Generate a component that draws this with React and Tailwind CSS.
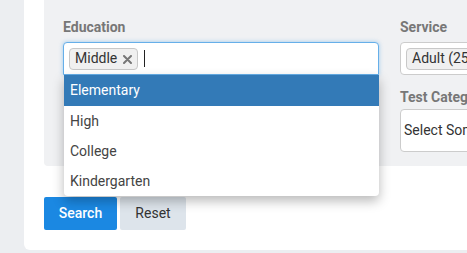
import React from "react";

export default function App() {
  const font = { fontFamily: "Roboto, 'Liberation Sans', Arial, sans-serif" };
  return (
    <div className="w-[467px] h-[253px] overflow-hidden bg-[#eceef1]" style={font}>
      <div className="ml-[24px] w-[470px] h-[250px] bg-white rounded-bl-[6px] pl-[20px] flex flex-col">
        <div className="h-[166px] bg-[#f0f1f3] rounded-bl-[4px] pl-[19px] pt-[17px] flex gap-[21px]">
          <div className="w-[316px] shrink-0 flex flex-col">
            <div className="h-[20px] leading-[20px] text-[14px] font-bold text-[#777] mb-[5px]">Education</div>
            <div className="relative">
              <div className="h-[33px] border border-[#66afe9] rounded-t-[4px] bg-white shadow-[0_0_4px_rgba(102,175,233,0.6)] flex items-center pl-[5px] gap-[6px]">
                <div className="h-[22px] px-[5px] flex items-center gap-[6px] bg-[#f0f0f0] border border-[#c8c8c8] rounded-[4px] text-[14px] text-[#333]">
                  <span>Middle</span>
                  <svg width="9" height="9" viewBox="0 0 9 9" className="mt-[1px]">
                    <path d="M1 1 L8 8 M8 1 L1 8" stroke="#777" strokeWidth="2" strokeLinecap="round" />
                  </svg>
                </div>
                <div className="w-[1px] h-[17px] bg-[#222]" />
              </div>
              <div className="absolute left-[1px] top-[33px] w-[315px] bg-white rounded-b-[4px] shadow-[0_5px_12px_rgba(0,0,0,0.28)] z-10 text-[14px]">
                <div className="h-[31px] flex items-center pl-[6px] bg-[#337ab7] text-white">Elementary</div>
                <div className="h-[30px] flex items-center pl-[6px] text-[#444]">High</div>
                <div className="h-[30px] flex items-center pl-[6px] text-[#444]">College</div>
                <div className="h-[30px] flex items-center pl-[6px] text-[#444]">Kindergarten</div>
              </div>
            </div>
          </div>
          <div className="w-[200px] shrink-0 flex flex-col">
            <div className="h-[20px] leading-[20px] text-[14px] font-bold text-[#777] mb-[5px]">Service</div>
            <div className="h-[33px] border border-[#ccc] rounded-[4px] bg-white flex items-center pl-[5px]">
              <div className="h-[22px] px-[5px] flex items-center bg-[#f0f0f0] border border-[#c8c8c8] rounded-[4px] text-[14px] text-[#333] whitespace-nowrap">
                Adult (25+)
              </div>
            </div>
            <div className="h-[20px] leading-[20px] text-[14px] font-bold text-[#777] mt-[12px] mb-[2px] whitespace-nowrap">Test Category</div>
            <div className="h-[43px] border border-[#ccc] rounded-[4px] bg-white flex items-center pl-[3px] text-[14px] text-[#333] whitespace-nowrap">
              Select Some Options
            </div>
          </div>
        </div>
        <div className="mt-[31px] flex gap-[3px]">
          <button className="w-[73px] h-[33px] bg-[#1b88e2] text-white text-[14px] font-medium rounded-[2px]">Search</button>
          <button className="w-[66px] h-[33px] bg-[#dde4eb] text-[#333] text-[14px] rounded-[2px]">Reset</button>
        </div>
      </div>
    </div>
  );
}
